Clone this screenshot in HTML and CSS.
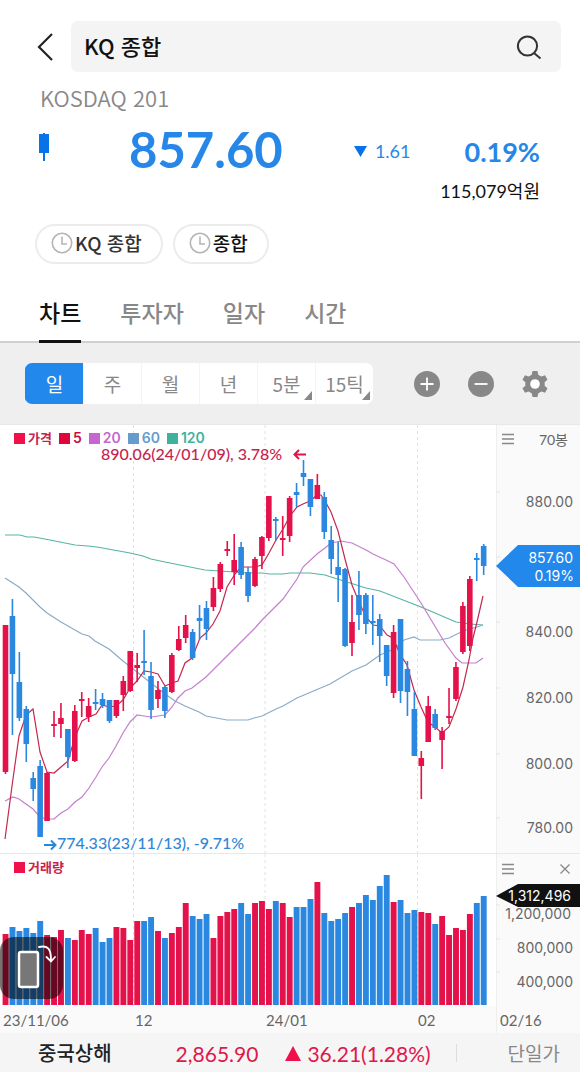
FILE: index.html
```html
<!DOCTYPE html>
<html lang="ko">
<head>
    <meta charset="UTF-8">
    <meta name="viewport" content="width=device-width, initial-scale=1.0">
    <title>KQ 종합</title>
    <link rel="stylesheet" href="styles.css">
</head>
<body>

<header>
    <div class="search-row">
        <button class="back" aria-label="뒤로">
            <svg width="18" height="30" viewBox="0 0 18 30"><path d="M15 2 L2 15 L15 28" fill="none" stroke="#222" stroke-width="2.2"/></svg>
        </button>
        <div class="search-box">
            <input type="text" value="KQ 종합" aria-label="종목 검색">
            <button aria-label="검색">
                <svg width="26" height="26" viewBox="0 0 26 26" fill="none" stroke="#333" stroke-width="2"><circle cx="11.5" cy="12" r="9.6"/><path d="M18 19 L24.5 24.5"/></svg>
            </button>
        </div>
    </div>

    <p class="code">KOSDAQ 201</p>

    <div class="quote">
        <svg class="mini-candle" width="10" height="28" viewBox="0 0 10 28" fill="#0873e6"><rect y="1" width="10" height="19"/><rect x="4" width="2" height="28"/></svg>
        <strong class="price">857.60</strong>
        <span class="change"><svg width="13" height="11" viewBox="0 0 13 11"><path d="M0 0H13L6.5 11Z" fill="#0873e6"/></svg>1.61</span>
        <strong class="rate">0.19%</strong>
    </div>
    <p class="amount">115,079억원</p>

    <div class="chips">
        <button class="chip"><svg width="22" height="22" viewBox="0 0 22 22" fill="none" stroke="#b5b5b5" stroke-width="1.6"><circle cx="11" cy="11" r="9.7"/><path d="M11 4.500V12H16"/></svg>KQ 종합</button>
        <button class="chip dark"><svg width="22" height="22" viewBox="0 0 22 22" fill="none" stroke="#b5b5b5" stroke-width="1.6"><circle cx="11" cy="11" r="9.7"/><path d="M11 4.500V12H16"/></svg>종합</button>
    </div>

    <nav>
        <a href="#chart" class="active">차트</a>
        <a href="#investor">투자자</a>
        <a href="#date">일자</a>
        <a href="#time">시간</a>
    </nav>
</header>

<main>
    <div class="toolbar">
        <div class="periods">
            <button class="active">일</button>
            <button>주</button>
            <button>월</button>
            <button>년</button>
            <button class="more">5분</button>
            <button class="more">15틱</button>
        </div>
        <div class="tools">
            <button aria-label="확대"><svg width="26" height="26" viewBox="0 0 26 26"><circle cx="13" cy="13" r="13" fill="#888"/><path d="M13 6.500V19.500M6.500 13H19.500" stroke="#fff" stroke-width="1.8"/></svg></button>
            <button aria-label="축소"><svg width="26" height="26" viewBox="0 0 26 26"><circle cx="13" cy="13" r="13" fill="#888"/><path d="M6.500 13H19.500" stroke="#fff" stroke-width="1.8"/></svg></button>
            <button aria-label="설정"><svg width="26" height="26" viewBox="0 0 26 26"><g fill="#888"><circle cx="13" cy="13" r="9.800"/><path id="tooth" d="M9.500 5L10.500 0H15.500L16.500 5V21L15.500 26H10.500L9.500 21Z"/><use href="#tooth" transform="rotate(60 13 13)"/><use href="#tooth" transform="rotate(120 13 13)"/></g><circle cx="13" cy="13" r="4.800" fill="#fff"/></svg></button>
        </div>
    </div>

    <div class="chart">
        <section class="plot">
            <ul class="legend">
                <li class="c-price">가격</li>
                <li class="c-5">5</li>
                <li class="c-20">20</li>
                <li class="c-60">60</li>
                <li class="c-120">120</li>
            </ul>
            <svg viewBox="0 0 496 428">
                <path class="guide" d="M133.500 0V428M265 0V428M417.500 0V428"/>
                <g id="averages"></g>
                <g id="candles"></g>
                <text x="101" y="35" class="note high">890.06(24/01/09), 3.78%</text>
                <path d="M306 29.500H295M299 25L294.500 29.500L299 34" class="arrow high-arrow"/>
                <text x="57" y="424" class="note low">774.33(23/11/13), -9.71%</text>
                <path d="M44 420H55M51 415.500L55.500 420L51 424.500" class="arrow low-arrow"/>
            </svg>
        </section>

        <section class="axis">
            <div class="axis-head">
                <button aria-label="가격 메뉴"><svg width="12" height="12" viewBox="0 0 12 12"><path d="M0 1.500H12M0 6H12M0 10.500H12" stroke="#888" stroke-width="1.300"/></svg></button>
                <span>70봉</span>
            </div>
            <svg viewBox="0 0 84 428">
                <path class="tick" d="M0 67H4M0 132H4M0 197H4M0 263H4M0 329H4M0 393H4"/>
                <text x="77" y="82">880.00</text>
                <text x="77" y="212">840.00</text>
                <text x="77" y="278">820.00</text>
                <text x="77" y="344">800.00</text>
                <text x="77" y="408">780.00</text>
                <path d="M0 141L22 120H84V162H22Z" fill="#2288ec"/>
                <text x="77" y="138" class="tag">857.60</text>
                <text x="78" y="156" class="tag">0.19%</text>
            </svg>
        </section>

        <section class="plot volume">
            <ul class="legend">
                <li class="c-price">거래량</li>
            </ul>
            <svg viewBox="0 0 496 152">
                <path class="guide" d="M133.500 0V152M265 0V152M417.500 0V152"/>
                <g id="volumes"></g>
            </svg>
            <button class="rotate" aria-label="가로 보기">
                <svg width="63" height="62" viewBox="0 0 63 62" fill="none" stroke="#fff" stroke-linecap="round"><rect x="19" y="15" width="19" height="35" rx="2" fill="#777" stroke-width="2.500"/><path d="M39 10C48 8 51 12 51 23M46.500 20L51 24.500L55 20" stroke-width="1.800"/></svg>
            </button>
        </section>

        <section class="axis volume">
            <div class="axis-head">
                <button aria-label="거래량 메뉴"><svg width="12" height="12" viewBox="0 0 12 12"><path d="M0 1.500H12M0 6H12M0 10.500H12" stroke="#888" stroke-width="1.300"/></svg></button>
                <button aria-label="닫기"><svg width="10" height="10" viewBox="0 0 10 10"><path d="M0.500 0.500L9.500 9.500M9.500 0.500L0.500 9.500" stroke="#888" stroke-width="1.300"/></svg></button>
            </div>
            <svg viewBox="0 0 84 152">
                <path class="tick" d="M0 51H4M0 85H4M0 118H4"/>
                <text x="75" y="65">1,200,000</text>
                <text x="77" y="99">800,000</text>
                <text x="77" y="133">400,000</text>
                <path d="M0 42L22 30H84V53H22Z" fill="#111"/>
                <text x="75" y="47" class="tag">1,312,496</text>
            </svg>
        </section>

        <div class="dates">
            <svg viewBox="0 0 496 27">
                <text x="3" y="20">23/11/06</text>
                <text x="135" y="20">12</text>
                <text x="266" y="20">24/01</text>
                <text x="418" y="20">02</text>
            </svg>
        </div>
        <div class="dates last">
            <svg viewBox="0 0 84 27">
                <text x="4" y="20">02/16</text>
            </svg>
        </div>
    </div>
</main>

<footer>
    <span class="market">중국상해</span>
    <span class="index">2,865.90</span>
    <span class="diff"><svg width="16" height="15" viewBox="0 0 16 15"><path d="M8 0L16 15H0Z" fill="#f0104a"/></svg>36.21(1.28%)</span>
    <button>단일가</button>
</footer>

<script src="chart.js"></script>
</body>
</html>
```
FILE: styles.css
```css
* {
    box-sizing: border-box;
}

body {
    margin: 0;
    background-color: #fff;
    color: #111;
    font-family: "Lato", "Noto Sans CJK KR", sans-serif;
}

p, ul {
    margin: 0;
    padding: 0;
}

button {
    margin: 0;
    padding: 0;
    border: none;
    background: none;
    font-family: inherit;
    cursor: pointer;
}

svg {
    display: block;
}

/* header */
.search-row {
    display: flex;
    align-items: center;
    gap: 16px;
    padding: 21px 19px 0 37px;
}

.search-box {
    flex: 1;
    display: flex;
    align-items: center;
    height: 51px;
    padding: 0 19px 0 13px;
    background-color: #f4f4f4;
    border-radius: 7px;
}

.search-box input {
    flex: 1;
    min-width: 0;
    padding: 0 0 4px;
    border: none;
    outline: none;
    background: none;
    color: #111;
    font: 500 22px/32px "Noto Sans CJK KR", sans-serif;
}

.code {
    padding: 9px 40px 0;
    color: #888;
    font: 350 22px/32px "Noto Sans CJK KR", sans-serif;
}

.quote {
    display: flex;
    align-items: center;
    height: 60px;
    margin-top: 6px;
    padding: 0 40px 0 39px;
    color: #2787e8;
}

.mini-candle {
    margin-bottom: 4px;
}

.price {
    margin-left: 80px;
    font-size: 49px;
    line-height: 60px;
}

.change {
    display: flex;
    align-items: center;
    gap: 8px;
    margin-left: auto;
    padding-top: 4px;
    font-size: 18px;
}

.rate {
    margin-left: 54px;
    padding-top: 4px;
    font-size: 27px;
}

.amount {
    margin-top: 2px;
    padding-right: 40px;
    text-align: right;
    font-size: 18px;
    line-height: 20px;
}

.chips {
    display: flex;
    gap: 10px;
    padding: 23px 35px 0;
}

.chip {
    display: flex;
    align-items: center;
    gap: 2px;
    height: 40px;
    padding: 0 19px 2px 14px;
    border: 2px solid #ececec;
    border-radius: 20px;
    color: #333;
    font: 500 19px/30px "Noto Sans CJK KR", sans-serif;
}

.chip.dark {
    color: #111;
}

nav {
    display: flex;
    gap: 39px;
    margin-top: 20px;
    padding: 0 39px;
    border-bottom: 2px solid #d0d0d0;
}

nav a {
    height: 59px;
    margin-bottom: -2px;
    border-bottom: 3px solid transparent;
    color: #888;
    font: 500 23px/56px "Noto Sans CJK KR", sans-serif;
    text-decoration: none;
}

nav a.active {
    border-color: #111;
    color: #111;
}

/* toolbar */
.toolbar {
    display: flex;
    align-items: center;
    justify-content: space-between;
    height: 81px;
    padding: 0 32px 0 25px;
    background-color: #efefef;
}

.periods {
    display: flex;
    flex: 0 1 348px;
    height: 41px;
    border-radius: 7px;
    overflow: hidden;
    background-color: #fff;
}

.periods button {
    position: relative;
    flex: 1;
    border-left: 1px solid #f4f4f4;
    color: #888;
    font: 400 19px/38px "Noto Sans CJK KR", sans-serif;
}

.periods .active {
    border-color: #2288ec;
    background-color: #2288ec;
    color: #fff;
}

.periods .more::after {
    content: "";
    position: absolute;
    right: 3px;
    bottom: 4px;
    border-left: 8px solid transparent;
    border-bottom: 9px solid #888;
}

.tools {
    display: flex;
    gap: 28px;
}

/* chart */
.chart {
    display: grid;
    grid-template-columns: 496fr 84fr;
}

.plot, .axis {
    position: relative;
    border-top: 1px solid #e8e8e8;
}

.plot > svg, .axis > svg, .dates > svg {
    width: 100%;
}

.axis {
    background-color: #fafafa;
}

.axis, .dates.last {
    box-shadow: inset 1px 0 #eee;
}

.legend {
    position: absolute;
    top: 4px;
    left: 14px;
    display: flex;
    gap: 7px;
    list-style: none;
    font: 600 14px/18px "Inter", "Noto Sans CJK KR", sans-serif;
}

.legend li {
    display: flex;
    align-items: center;
    gap: 3px;
}

.legend li::before {
    content: "";
    width: 11px;
    height: 11px;
    background-color: currentColor;
}

.c-price {
    color: #c8234f;
    font-size: 13px;
}

.c-5 {
    color: #c8103f;
}

.c-20 {
    color: #c566d2;
}

.c-60 {
    color: #669bcd;
}

.c-120 {
    color: #3fb19d;
}

.legend .c-price::before {
    background-color: #f0104a;
}

.legend .c-5::before {
    background-color: #e0063b;
}

.guide {
    fill: none;
    stroke: #e2e2e2;
    stroke-dasharray: 3 3;
}

.note {
    font-size: 16px;
    font-weight: 500;
}

.high {
    fill: #c8234f;
}

.low {
    fill: #2f87d6;
}

.arrow {
    fill: none;
    stroke-width: 2;
}

.high-arrow {
    stroke: #e5114a;
}

.low-arrow {
    stroke: #2288e0;
}

.up {
    fill: #e5114a;
}

.down {
    fill: #2b88e0;
}

.average {
    fill: none;
    stroke-width: 1.2;
}

.axis-head {
    position: absolute;
    top: 4px;
    left: 6px;
    right: 12px;
    display: flex;
    align-items: center;
    justify-content: space-between;
    height: 20px;
    color: #666;
    font-size: 14px;
}

.axis text {
    fill: #666;
    font: 14px "Inter", sans-serif;
    text-anchor: end;
}

.axis .tag {
    fill: #fff;
}

.tick {
    stroke: #e4e4e4;
}

.volume .legend {
    top: 4px;
}

.volume .axis-head {
    top: 5px;
    right: 10px;
}

.rotate {
    position: absolute;
    left: 0;
    bottom: 7px;
    border-radius: 14px;
    background-color: rgba(0, 0, 0, 0.55);
}

.dates {
    background-color: #fafafa;
}

.dates text {
    fill: #666;
    font-size: 15px;
}

/* bottom ticker */
footer {
    display: flex;
    align-items: center;
    height: 40px;
    padding: 0 20px 0 38px;
    background-color: #f5f5f5;
    color: #e0174d;
    font-size: 21px;
}

footer .market {
    color: #222;
    font: 500 20px/36px "Noto Sans CJK KR", sans-serif;
}

footer .index {
    margin-left: 64px;
}

footer .diff {
    display: flex;
    align-items: center;
    gap: 6px;
    margin: 0 auto 0 27px;
}

footer button {
    padding-left: 51px;
    border-left: 1px solid #ddd;
    color: #888;
    font: 400 19px/18px "Noto Sans CJK KR", sans-serif;
}
```
FILE: chart.js
```js
var STEP = 6.93;
var FIRST = 5.5;

// [direction, high, body top, body bottom, low]
var candles = [
    ["u", 200, 200, 347, 349], ["d", 174, 191, 249, 310], ["d", 227, 257, 293, 296], ["d", 281, 284, 319, 337], ["d", 347, 353, 364, 376],
    ["d", 335, 341, 412, 412], ["u", 347, 348, 396, 396], ["u", 286, 299, 301, 312], ["u", 278, 293, 299, 313], ["d", 304, 304, 332, 343],
    ["u", 280, 286, 336, 337], ["u", 267, 274, 276, 292], ["u", 273, 281, 292, 297], ["d", 264, 277, 278, 285], ["d", 268, 274, 280, 283],
    ["d", 275, 275, 296, 298], ["u", 275, 275, 291, 293], ["u", 251, 256, 270, 286], ["u", 226, 226, 266, 267], ["u", 228, 240, 243, 257],
    ["d", 205, 236, 237, 250], ["d", 237, 251, 285, 294], ["u", 256, 265, 274, 283], ["d", 261, 262, 286, 293], ["u", 228, 230, 267, 268],
    ["u", 201, 214, 225, 226], ["u", 190, 200, 213, 218], ["d", 204, 207, 233, 235], ["d", 180, 193, 196, 215], ["d", 176, 183, 204, 215],
    ["u", 152, 163, 182, 186], ["u", 137, 139, 164, 167], ["u", 116, 124, 126, 131], ["u", 109, 135, 147, 160], ["d", 117, 122, 150, 154],
    ["d", 142, 147, 171, 177], ["u", 132, 134, 161, 162], ["u", 111, 112, 131, 144], ["u", 71, 71, 113, 116], ["d", 92, 94, 95, 116],
    ["u", 91, 113, 115, 131], ["u", 71, 73, 111, 117], ["d", 58, 67, 70, 82], ["d", 35, 48, 52, 61], ["d", 54, 54, 82, 91],
    ["u", 49, 60, 74, 74], ["d", 67, 72, 107, 114], ["d", 101, 115, 134, 149], ["d", 117, 142, 150, 177], ["d", 143, 144, 221, 222],
    ["u", 170, 197, 218, 231], ["d", 146, 170, 190, 205], ["d", 168, 170, 199, 209], ["d", 170, 196, 198, 220], ["d", 189, 194, 211, 237],
    ["d", 220, 220, 251, 261], ["u", 200, 207, 268, 273], ["d", 194, 194, 266, 278], ["d", 236, 244, 267, 291], ["d", 267, 284, 331, 331],
    ["u", 326, 333, 341, 374], ["u", 271, 281, 317, 317], ["d", 284, 289, 303, 305], ["u", 302, 306, 315, 344], ["u", 263, 291, 293, 299],
    ["u", 237, 242, 274, 276], ["u", 177, 181, 227, 229], ["u", 151, 154, 221, 226], ["d", 128, 133, 135, 156], ["d", 119, 121, 141, 150]
];

// bar heights
var volumes = [
    71, 78, 74, 77, 72, 84, 70, 68, 75, 67, 65, 75, 71, 77, 63, 67, 78, 77, 65, 84, 84, 88, 74, 67, 72,
    78, 102, 89, 86, 91, 67, 89, 93, 96, 102, 91, 102, 104, 96, 104, 102, 88, 98, 98, 106, 123, 92, 84, 86, 92,
    98, 102, 110, 105, 119, 130, 103, 105, 92, 95, 93, 92, 81, 89, 70, 77, 75, 91, 102, 109
];

var averages = [
    { color: "#55b5a3", points: "5,110 20,110 27,112 34,112 50,115 75,120 88,121 97,122 130,128 143,131 151,134 165,137 185,141 205,145 220,146 234,147 248,148 262,148 270,149 283,149 290,148 310,148 325,150 331,152 350,158 366,163 380,166 421,182 428,185 456,197 470,199 483,200" },
    { color: "#8aabc8", points: "5,153 19,162 26,168 40,182 47,188 61,197 75,205 82,209 89,211 95,216 109,224 123,236 137,247 151,258 165,269 175,276 185,281 199,287 206,291 227,295 248,295 254,293 262,291 276,284 283,281 297,273 330,259 352,246 366,240 380,230 394,224 404,215 414,212 420,215 440,215 449,213 463,206 477,202 483,200" },
    { color: "#c37fce", points: "5,376 13,372 19,374 26,379 33,384 40,392 47,394 54,394 61,388 68,384 75,377 82,372 89,363 96,352 102,342 109,333 116,321 123,308 130,297 137,290 144,291 151,292 158,291 165,290 172,282 178,273 185,266 192,263 206,252 224,234 240,218 248,210 255,203 262,195 283,174 297,154 303,142 317,129 325,123 331,118 341,116 352,118 366,125 373,129 386,135 394,139 404,152 421,178 445,218 456,233 462,238 476,238 483,233" },
    { color: "#c5284f", points: "5,414 12,361 19,311 26,290 33,284 40,327 47,347 54,348 61,342 68,336 75,312 82,296 89,292 96,289 102,280 109,282 116,281 123,275 130,263 137,256 144,246 151,247 158,249 165,261 172,258 178,256 185,238 192,233 200,213 206,208 213,199 220,186 227,162 235,149 241,142 255,142 262,140 269,128 276,115 283,104 290,91 297,82 303,79 310,76 317,70 321,70 325,76 331,87 338,106 345,134 352,160 359,177 366,192 373,200 380,201 387,210 393,213 400,229 407,240 414,265 421,282 428,297 435,302 442,308 449,302 456,284 463,262 469,235 473,213 477,197 483,171" }
];

function drawAverages() {
    document.getElementById("averages").innerHTML = averages.map(line =>
        `<polyline class="average" points="${line.points}" stroke="${line.color}"/>`
    ).join("");
}

function drawCandles() {
    document.getElementById("candles").innerHTML = candles.map((c, i) => {
        var x = FIRST + i * STEP;
        var name = c[0] === "u" ? "up" : "down";
        return `<g class="${name}"><rect x="${x - 0.8}" y="${c[1]}" width="1.6" height="${c[4] - c[1]}"/>` +
            `<rect x="${x - 2.8}" y="${c[2]}" width="5.6" height="${Math.max(c[3] - c[2], 2)}"/></g>`;
    }).join("");
}

function drawVolumes() {
    document.getElementById("volumes").innerHTML = volumes.map((v, i) => {
        var x = FIRST + i * STEP;
        var name = candles[i][0] === "u" ? "up" : "down";
        return `<rect class="${name}" x="${x - 2.9}" y="${151 - v}" width="5.9" height="${v}"/>`;
    }).join("");
}

drawAverages();
drawCandles();
drawVolumes();
```
